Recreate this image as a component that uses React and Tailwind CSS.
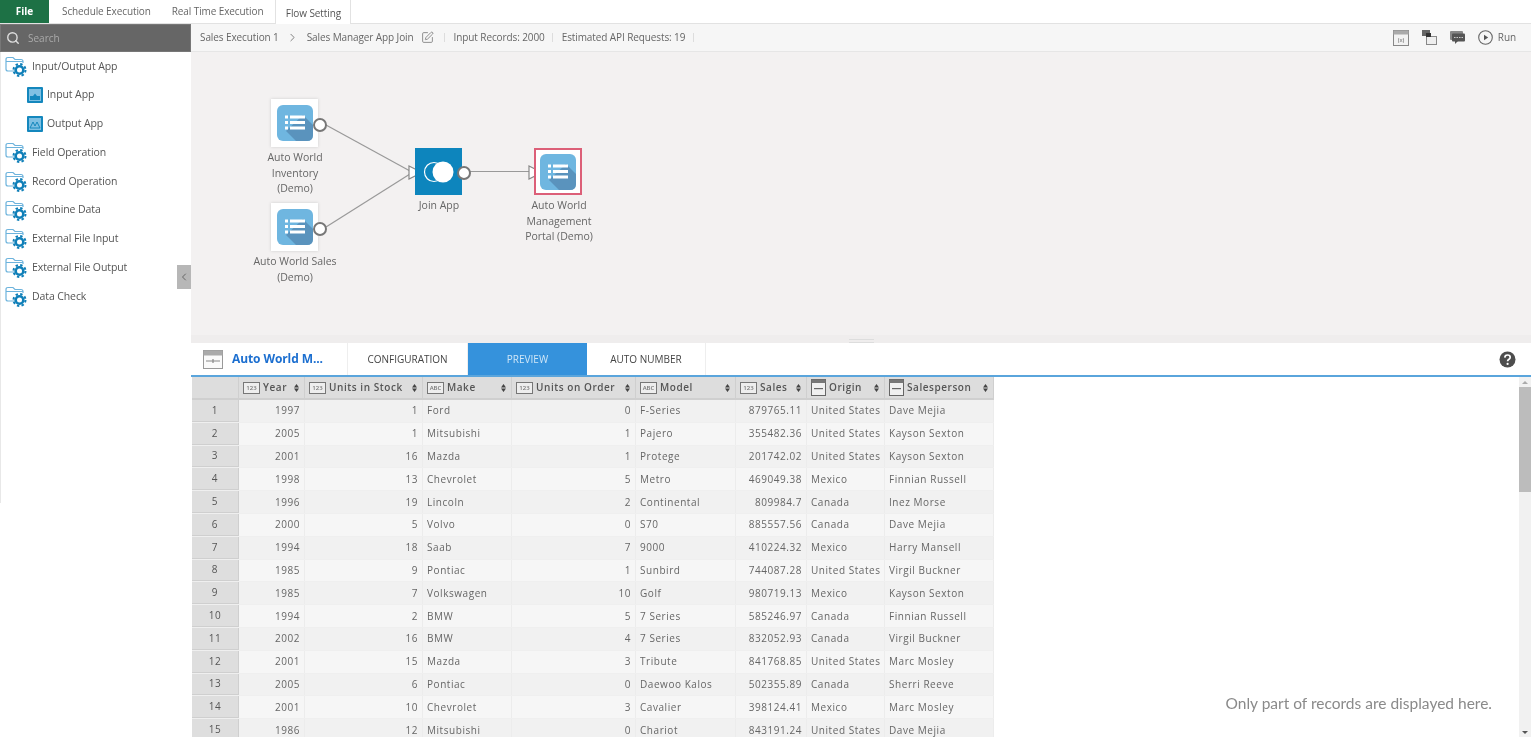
import { ChevronLeft, ChevronRight, Search, SquarePen } from 'lucide-react';

const SIDE_ITEMS = [
  { label: 'Input/Output App' },
  { label: 'Input App', sub: true },
  { label: 'Output App', sub: true },
  { label: 'Field Operation' },
  { label: 'Record Operation' },
  { label: 'Combine Data' },
  { label: 'External File Input' },
  { label: 'External File Output' },
  { label: 'Data Check' },
];

const COLUMNS = [
  { label: 'Year', type: '123' },
  { label: 'Units in Stock', type: '123' },
  { label: 'Make', type: 'ABC' },
  { label: 'Units on Order', type: '123' },
  { label: 'Model', type: 'ABC' },
  { label: 'Sales', type: '123' },
  { label: 'Origin', type: 'list' },
  { label: 'Salesperson', type: 'list' },
];

const ROWS = [
  ['1997', '1', 'Ford', '0', 'F-Series', '879765.11', 'United States', 'Dave Mejia'],
  ['2005', '1', 'Mitsubishi', '1', 'Pajero', '355482.36', 'United States', 'Kayson Sexton'],
  ['2001', '16', 'Mazda', '1', 'Protege', '201742.02', 'United States', 'Kayson Sexton'],
  ['1998', '13', 'Chevrolet', '5', 'Metro', '469049.38', 'Mexico', 'Finnian Russell'],
  ['1996', '19', 'Lincoln', '2', 'Continental', '809984.7', 'Canada', 'Inez Morse'],
  ['2000', '5', 'Volvo', '0', 'S70', '885557.56', 'Canada', 'Dave Mejia'],
  ['1994', '18', 'Saab', '7', '9000', '410224.32', 'Mexico', 'Harry Mansell'],
  ['1985', '9', 'Pontiac', '1', 'Sunbird', '744087.28', 'United States', 'Virgil Buckner'],
  ['1985', '7', 'Volkswagen', '10', 'Golf', '980719.13', 'Mexico', 'Kayson Sexton'],
  ['1994', '2', 'BMW', '5', '7 Series', '585246.97', 'Canada', 'Finnian Russell'],
  ['2002', '16', 'BMW', '4', '7 Series', '832052.93', 'Canada', 'Virgil Buckner'],
  ['2001', '15', 'Mazda', '3', 'Tribute', '841768.85', 'United States', 'Marc Mosley'],
  ['2005', '6', 'Pontiac', '0', 'Daewoo Kalos', '502355.89', 'Canada', 'Sherri Reeve'],
  ['2001', '10', 'Chevrolet', '3', 'Cavalier', '398124.41', 'Mexico', 'Marc Mosley'],
  ['1986', '12', 'Mitsubishi', '0', 'Chariot', '843191.24', 'United States', 'Dave Mejia'],
];

const GRID = 'grid grid-cols-[47px_66px_118px_89px_124px_100px_71px_78px_109px]';

function FolderGear() {
  return (
    <svg width="23" height="23" viewBox="0 0 23 23" className="shrink-0">
      <path d="M1 4.5 V14 Q1 16 3 16 H10 M1 4.5 Q1 2.5 3 2.5 H8 L10 4.5 H16 Q18 4.5 18 6.5 V8 M1 6.5 H18" fill="none" stroke="#6db3dc" strokeWidth="1.2" />
      <circle cx="14.5" cy="15" r="3.8" fill="none" stroke="#0f7fb8" strokeWidth="2.6" />
      <circle cx="14.5" cy="15" r="6" fill="none" stroke="#0f7fb8" strokeWidth="2" strokeDasharray="2.4 2.31" />
    </svg>
  );
}

function SubAppIcon({ output }) {
  return (
    <svg width="16" height="16" viewBox="0 0 16 16" className="shrink-0">
      <rect width="16" height="16" rx="1" fill="#1487bd" />
      <rect x="2" y="2" width="12" height="12" fill="#7fc0e3" />
      {output ? (
        <path d="M3 12 L6 6 L8 10 L10 6 L13 12 Z" fill="none" stroke="#1487bd" strokeWidth="1" />
      ) : (
        <path d="M3 9 H6 L8 6.5 L10 9 H13 V13 H3 Z" fill="#1487bd" />
      )}
    </svg>
  );
}

function AppIcon() {
  return (
    <svg width="36" height="36" viewBox="0 0 36 36">
      <rect width="36" height="36" rx="6" fill="#6fb6e0" />
      <path d="M9 26 L26 10 L36 20 V30 Q36 36 30 36 H19 Z" fill="#5a93bd" />
      <g fill="#fff">
        <rect x="8" y="10.5" width="3" height="3" />
        <rect x="13" y="10.5" width="15" height="3" />
        <rect x="8" y="16" width="3" height="3" />
        <rect x="13" y="16" width="15" height="3" />
        <rect x="8" y="21.5" width="3" height="3" />
        <rect x="13" y="21.5" width="15" height="3" />
      </g>
    </svg>
  );
}

function Port({ className }) {
  return <div className={`absolute w-[14px] h-[14px] rounded-full bg-white border-2 border-[#777] ${className}`} />;
}

function Caption({ lines, className }) {
  return (
    <div className={`absolute text-center text-[10.5px] leading-[15.7px] text-[#666] whitespace-nowrap -translate-x-1/2 ${className}`}>
      {lines.map((l) => (
        <div key={l}>{l}</div>
      ))}
    </div>
  );
}

function TypeIcon({ type }) {
  if (type === 'list') {
    return (
      <svg width="15" height="17" viewBox="0 0 15 17" className="shrink-0">
        <rect x="0.5" y="0.5" width="14" height="16" fill="#f0f0f0" stroke="#666" />
        <rect x="0.5" y="0.5" width="14" height="3.5" fill="#777" />
        <rect x="3" y="9" width="9" height="1.2" fill="#666" />
      </svg>
    );
  }
  return (
    <span className="shrink-0 w-[17px] h-[12px] border border-[#777] bg-[#eee] text-[6px] leading-[10px] text-center text-[#777] tracking-normal">
      {type}
    </span>
  );
}

function SortIcon() {
  return (
    <svg width="5" height="8" viewBox="0 0 5 8" className="shrink-0">
      <path d="M2.5 0 L5 3.4 H0 Z M2.5 8 L5 4.6 H0 Z" fill="#444" />
    </svg>
  );
}

function Sep({ className }) {
  return <span className={`w-px h-[9px] bg-[#ddd] ${className}`} />;
}

export default function App() {
  return (
    <div className="w-[1531px] h-[737px] overflow-hidden flex flex-col bg-white font-['Open_Sans',sans-serif] text-[#666] blur-[0.35px]">
      {/* top tabs */}
      <div className="h-[24px] shrink-0 flex items-stretch border-b border-[#e2e2e2] text-[10px]">
        <div className="w-[49px] bg-[#1d7145] text-white font-bold flex items-center justify-center">File</div>
        <div className="pl-[13px] flex items-center tracking-[-0.1px]">Schedule Execution</div>
        <div className="pl-[21px] flex items-center tracking-[-0.1px]">Real Time Execution</div>
        <div className="ml-[12px] w-[76px] h-[24px] bg-white border-x border-[#e2e2e2] flex items-center justify-center text-[#555] pt-[2px] tracking-[-0.1px]">
          Flow Setting
        </div>
      </div>

      <div className="flex-1 flex min-h-0">
        {/* sidebar */}
        <aside className="relative w-[191px] shrink-0">
          <div className="h-[28px] bg-[#666] border border-[#777] flex items-center pl-[5px] gap-[8px] text-[#aaa] text-[10px]">
            <Search size={14} strokeWidth={2.4} className="text-[#ddd]" />
            Search
          </div>
          <div className="h-[451px] border-l border-[#e8e8e8] text-[10.5px] text-[#555] tracking-[-0.1px]">
            {SIDE_ITEMS.map((item) => (
              <div key={item.label} className={`h-[28.75px] flex items-center ${item.sub ? 'pl-[26px] gap-[4px]' : 'pl-[4px] gap-[4px]'}`}>
                {item.sub ? <SubAppIcon output={item.label === 'Output App'} /> : <FolderGear />}
                {item.label}
              </div>
            ))}
          </div>
          <div className="absolute left-[177px] top-[241px] w-[14px] h-[24px] bg-[#b7b7b7] flex items-center justify-center">
            <ChevronLeft size={12} className="text-[#666]" />
          </div>
        </aside>

        <main className="flex-1 min-w-0 flex flex-col">
          {/* breadcrumb toolbar */}
          <div className="h-[28px] shrink-0 bg-[#f6f6f6] border-b border-[#e6e6e6] flex items-center pl-[9px] pr-[15px] text-[10px] tracking-[-0.1px] text-[#666]">
            <span>Sales Execution 1</span>
            <ChevronRight size={13} strokeWidth={1.5} className="ml-[7px] text-[#666]" />
            <span className="ml-[8px]">Sales Manager App Join</span>
            <SquarePen size={13} strokeWidth={1.5} className="ml-[7px] text-[#777]" />
            <Sep className="ml-[10px]" />
            <span className="ml-[9px]">Input Records: 2000</span>
            <Sep className="ml-[7px]" />
            <span className="ml-[9px]">Estimated API Requests: 19</span>
            <Sep className="ml-[8px]" />
            <div className="ml-auto flex items-center gap-[13px]">
              <svg width="16" height="16" viewBox="0 0 16 16">
                <rect x="0.5" y="0.5" width="15" height="15" fill="#f2f2f2" stroke="#888" />
                <rect x="0.5" y="0.5" width="15" height="4" fill="#aaa" />
                <text x="8" y="12" fontSize="6" textAnchor="middle" fill="#666">(x)</text>
              </svg>
              <svg width="15" height="15" viewBox="0 0 15 15">
                <rect x="0" y="0" width="8" height="6" fill="#666" />
                <rect x="4.5" y="6.5" width="10" height="8" fill="#eee" stroke="#888" />
                <rect x="4" y="3" width="5" height="4" fill="#333" />
              </svg>
              <svg width="15" height="13" viewBox="0 0 15 13">
                <rect x="0" y="0" width="13" height="9" rx="1" fill="#888" />
                <rect x="2" y="2.5" width="13" height="8" rx="1" fill="#555" />
                <path d="M5 10 V13 L8 10 Z" fill="#555" />
                <path d="M4 6.5 H13" stroke="#ccc" strokeDasharray="1.5 1" />
              </svg>
              <div className="flex items-center gap-[5px]">
                <svg width="15" height="15" viewBox="0 0 15 15">
                  <circle cx="7.5" cy="7.5" r="6.8" fill="none" stroke="#666" strokeWidth="1.1" />
                  <path d="M6 4.8 L10.2 7.5 L6 10.2 Z" fill="#555" />
                </svg>
                Run
              </div>
            </div>
          </div>

          {/* flow canvas */}
          <div className="relative h-[283px] shrink-0 bg-[#f3f1f1]">
            <svg className="absolute inset-0" width="1340" height="283">
              <g stroke="#999" strokeWidth="1.2" fill="none">
                <path d="M135 73 L219 119" />
                <path d="M135 175 L219 122" />
                <path d="M279 119.5 H339" />
              </g>
              <g fill="#fff" stroke="#888" strokeWidth="1.2">
                <path d="M218 114 L231 120.5 L218 127 Z" />
                <path d="M338 114 L351 120.5 L338 127 Z" />
              </g>
            </svg>

            <div className="absolute left-[80px] top-[47px] w-[47px] h-[48px] bg-white shadow-[0_0_3px_#ccc] flex items-center justify-center">
              <AppIcon />
            </div>
            <Port className="left-[122px] top-[66px]" />
            <Caption lines={['Auto World', 'Inventory', '(Demo)']} className="left-[104px] top-[98px]" />

            <div className="absolute left-[80px] top-[151px] w-[47px] h-[48px] bg-white shadow-[0_0_3px_#ccc] flex items-center justify-center">
              <AppIcon />
            </div>
            <Port className="left-[122px] top-[170px]" />
            <Caption lines={['Auto World Sales', '(Demo)']} className="left-[104px] top-[202px]" />

            <div className="absolute left-[224px] top-[96px] w-[47px] h-[47px] bg-[#0d85bd] flex items-center justify-center">
              <svg width="40" height="26" viewBox="0 0 40 26">
                <circle cx="15" cy="13" r="9.5" fill="none" stroke="#fff" strokeWidth="1.2" />
                <circle cx="24" cy="13" r="10.5" fill="#fff" />
              </svg>
            </div>
            <Port className="left-[266px] top-[114px]" />
            <Caption lines={['Join App']} className="left-[248px] top-[146px]" />

            <div className="absolute left-[343px] top-[96px] w-[48px] h-[47px] bg-white border-2 border-[#dc5f78] flex items-center justify-center">
              <AppIcon />
            </div>
            <Caption lines={['Auto World', 'Management', 'Portal (Demo)']} className="left-[368px] top-[146px]" />
          </div>

          {/* splitter */}
          <div className="h-[8px] shrink-0 bg-[#efeded] flex items-center justify-center">
            <div className="w-[25px] h-[4px] border-y border-[#ddd] mb-[-3px]" />
          </div>

          {/* detail panel */}
          <div className="flex-1 min-h-0 flex flex-col">
            <div className="h-[34px] shrink-0 flex items-stretch border-b-2 border-[#5aa5dc] pr-[15px]">
              <div className="w-[157px] flex items-center pl-[12px] gap-[9px] border-r border-[#eee]">
                <svg width="20" height="19" viewBox="0 0 20 19" className="shrink-0">
                  <rect x="0.5" y="0.5" width="19" height="18" fill="#fafafa" stroke="#999" />
                  <rect x="0.5" y="0.5" width="19" height="5" fill="#aaa" />
                  <path d="M3 11 H17 M10 9 V13" stroke="#888" strokeWidth="1.2" />
                </svg>
                <span className="text-[12px] font-bold text-[#1c6fd0] tracking-[-0.1px]">Auto World M...</span>
              </div>
              <div className="w-[120px] flex items-center justify-center text-[10px] text-[#444] border-r border-[#eee]">CONFIGURATION</div>
              <div className="w-[119px] flex items-center justify-center text-[10px] text-[#cfe6f7] bg-[#3592dc]">PREVIEW</div>
              <div className="w-[119px] flex items-center justify-center text-[10px] text-[#444] border-r border-[#eee]">AUTO NUMBER</div>
              <div className="ml-auto flex items-center">
                <svg width="17" height="17" viewBox="0 0 17 17">
                  <circle cx="8.5" cy="8.5" r="8" fill="#4d4d4d" />
                  <path d="M5.8 6.6 Q5.9 4 8.5 4 Q11.2 4 11.2 6.2 Q11.2 7.6 9.7 8.4 Q8.6 9 8.6 10.3" fill="none" stroke="#fff" strokeWidth="1.7" />
                  <circle cx="8.6" cy="12.9" r="1.1" fill="#fff" />
                </svg>
              </div>
            </div>

            <div className="flex-1 min-h-0 flex pl-px overflow-hidden">
              {/* preview grid */}
              <div className="w-[802px] shrink-0 text-[10px] tracking-[0.55px] text-[#666]">
                <div className={`${GRID} h-[23px] bg-[#dddddd] border-b-2 border-[#cfcfcf] font-semibold text-[#555]`}>
                  <div className="border-r border-[#cfcfcf]" />
                  {COLUMNS.map((c) => (
                    <div key={c.label} className="flex items-center pl-[4px] pr-[5px] gap-[3px] border-r border-[#cfcfcf] whitespace-nowrap">
                      <TypeIcon type={c.type} />
                      <span className="flex-1">{c.label}</span>
                      <SortIcon />
                    </div>
                  ))}
                </div>
                {ROWS.map((row, i) => (
                  <div key={i} className={`${GRID} h-[22.8px] border-b border-[#efefef] ${i % 2 ? 'bg-[#f6f6f6]' : 'bg-[#f1f1f1]'}`}>
                    <div className="bg-[#dedede] border-b border-[#cfcfcf] border-r flex items-center justify-center text-[#555]">{i + 1}</div>
                    {row.map((cell, j) => (
                      <div
                        key={j}
                        className={`flex items-center px-[4px] whitespace-nowrap border-r border-[#ececec] ${[0, 1, 3, 5].includes(j) ? 'justify-end' : ''}`}
                      >
                        {cell}
                      </div>
                    ))}
                  </div>
                ))}
              </div>

              <div className="flex-1 flex items-end justify-end pr-[27px] pb-[22px]">
                <span className="text-[15.5px] text-[#8a8a8a] whitespace-nowrap font-['Lato',sans-serif]">Only part of records are displayed here.</span>
              </div>

              {/* scrollbar */}
              <div className="w-[12px] shrink-0 bg-[#f1f1f1] flex flex-col items-center">
                <div className="h-[10px] flex items-center">
                  <div className="w-0 h-0 border-x-[3px] border-x-transparent border-b-[3px] border-b-[#aaa]" />
                </div>
                <div className="w-[12px] h-[105px] bg-[#bcbcbc]" />
                <div className="mt-auto h-[10px] flex items-center">
                  <div className="w-0 h-0 border-x-[3px] border-x-transparent border-t-[3px] border-t-[#555]" />
                </div>
              </div>
            </div>
          </div>
        </main>
      </div>
    </div>
  );
}
